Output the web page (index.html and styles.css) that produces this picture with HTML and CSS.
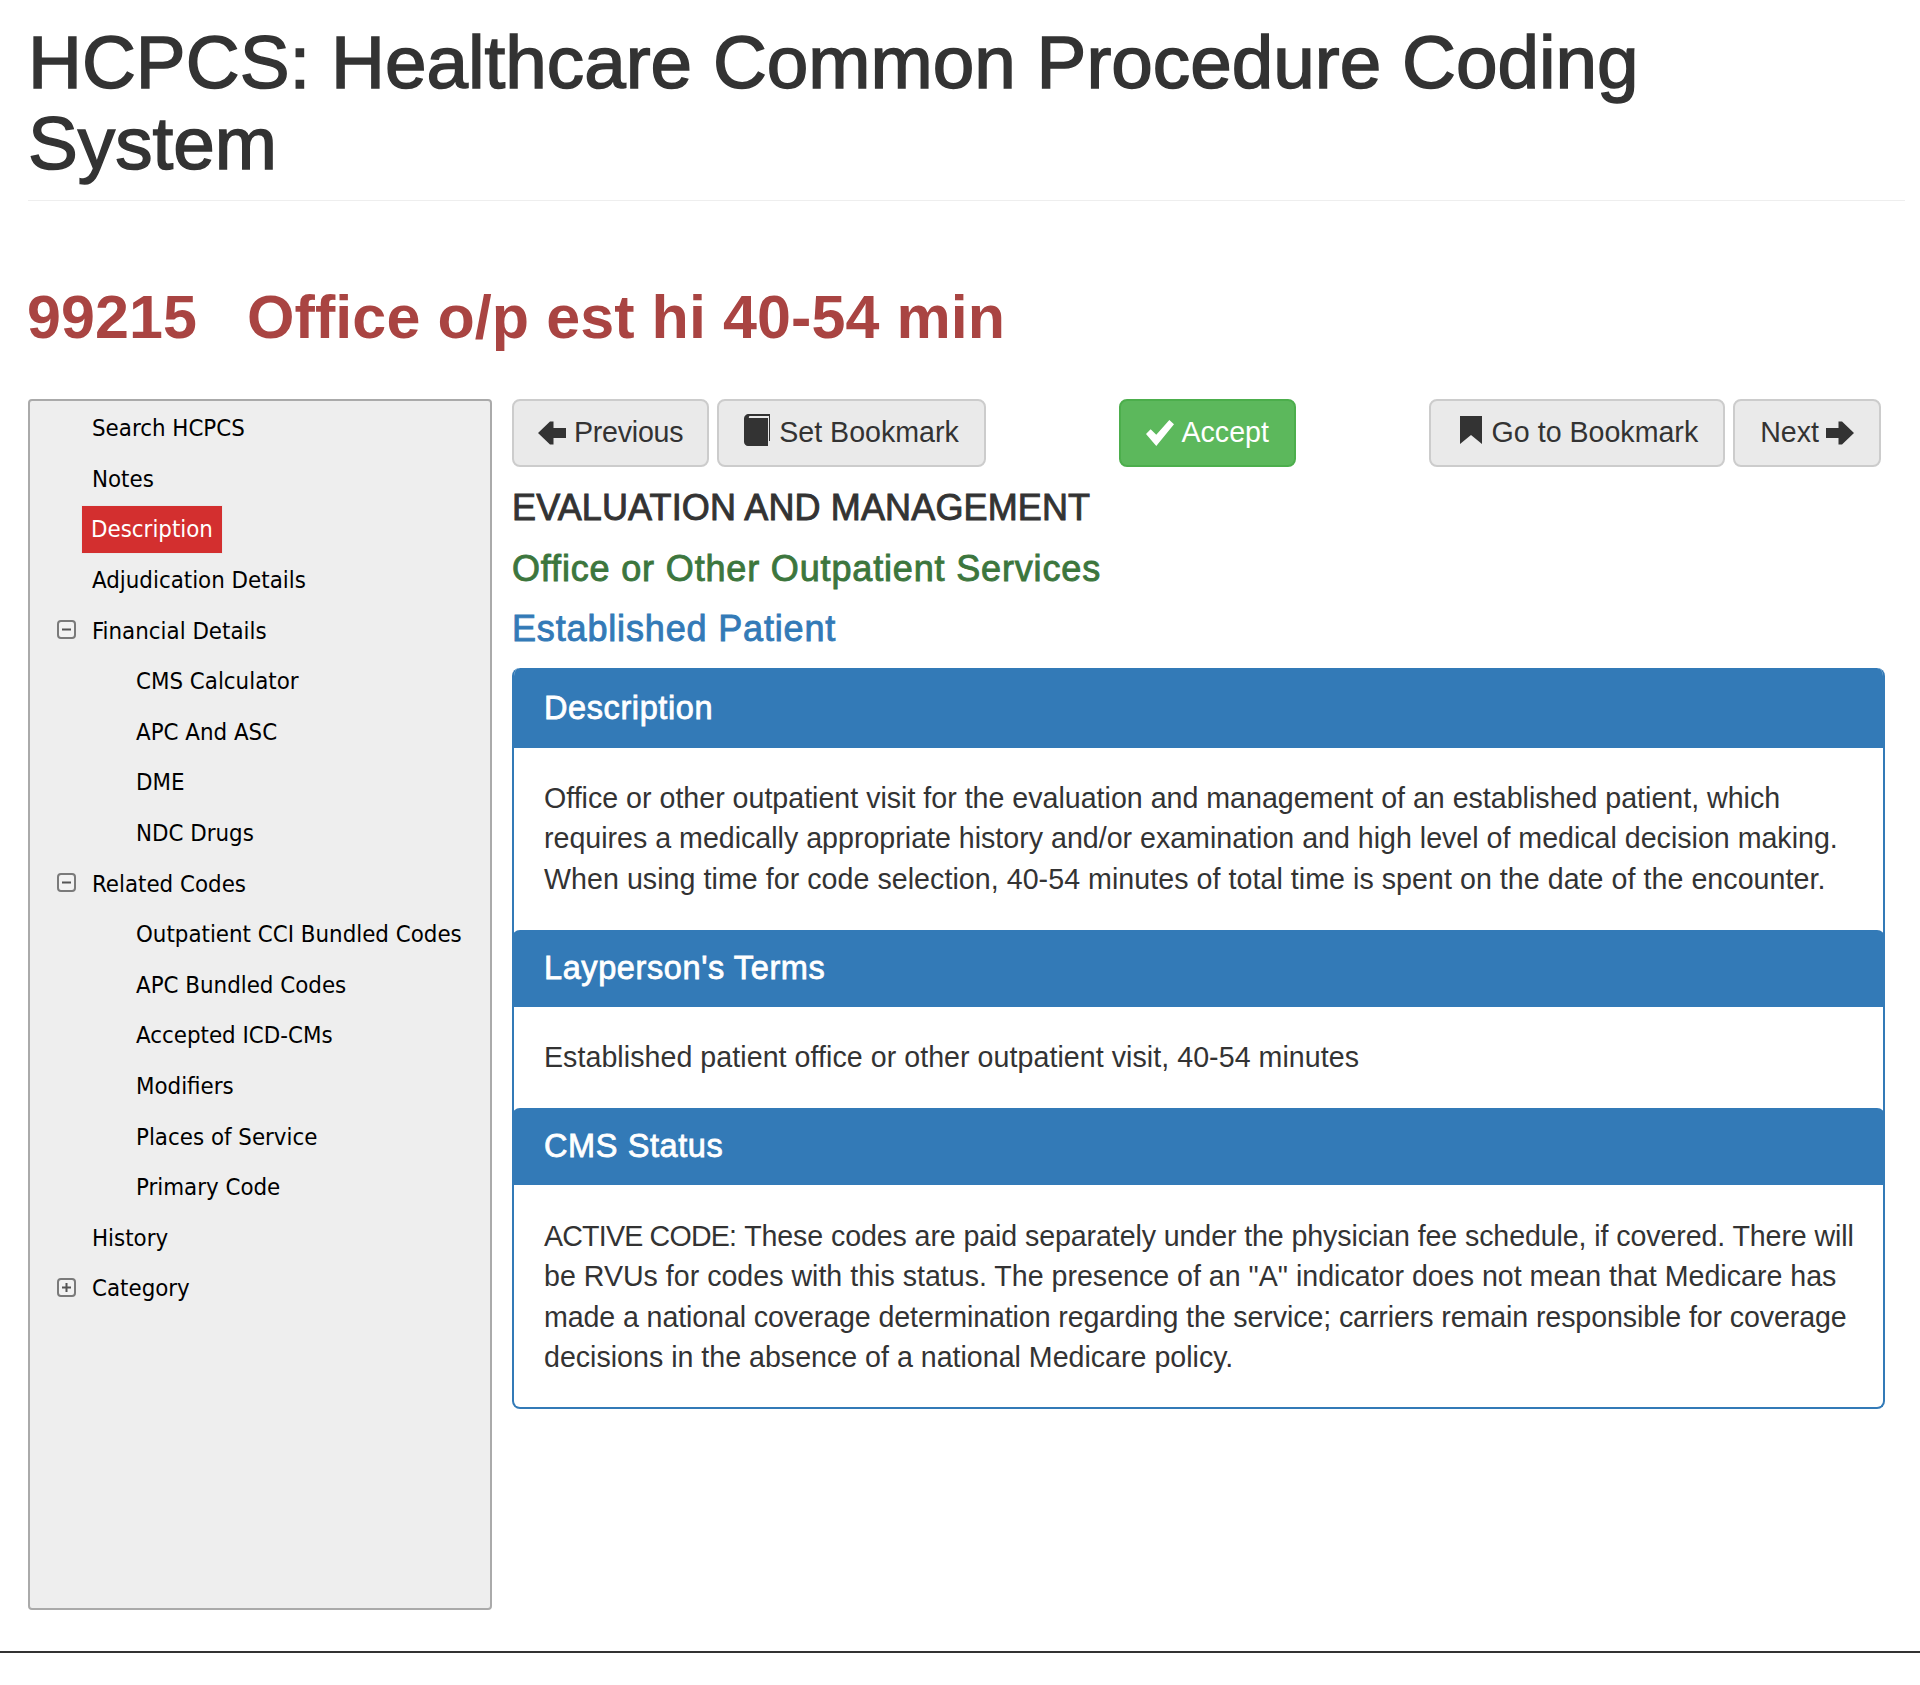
FILE: index.html
```html
<!DOCTYPE html>
<html lang="en">
<head>
<meta charset="utf-8">
<title>HCPCS</title>
<link rel="stylesheet" href="styles.css">
</head>
<body>
<div class="page">
  <h1 class="title">HCPCS: Healthcare Common Procedure Coding<br>System</h1>
  <h2 class="code"><span class="code-num">99215</span><span>Office o/p est hi 40-54 min</span></h2>
  <div class="main">
    <nav class="tree">
      <div class="node"><span class="label">Search HCPCS</span></div>
      <div class="node"><span class="label">Notes</span></div>
      <div class="node"><span class="label active">Description</span></div>
      <div class="node"><span class="label">Adjudication Details</span></div>
      <div class="node"><svg class="toggle" viewBox="0 0 19 19"><rect x="1" y="1" width="17" height="17" rx="3" fill="#f2f2f2" stroke="#7a7a7a" stroke-width="2"/><path d="M5 9.500h9" stroke="#555" stroke-width="2"/></svg><span class="label">Financial Details</span></div>
      <div class="node child"><span class="label">CMS Calculator</span></div>
      <div class="node child"><span class="label">APC And ASC</span></div>
      <div class="node child"><span class="label">DME</span></div>
      <div class="node child"><span class="label">NDC Drugs</span></div>
      <div class="node"><svg class="toggle" viewBox="0 0 19 19"><rect x="1" y="1" width="17" height="17" rx="3" fill="#f2f2f2" stroke="#7a7a7a" stroke-width="2"/><path d="M5 9.500h9" stroke="#555" stroke-width="2"/></svg><span class="label">Related Codes</span></div>
      <div class="node child"><span class="label">Outpatient CCI Bundled Codes</span></div>
      <div class="node child"><span class="label">APC Bundled Codes</span></div>
      <div class="node child"><span class="label">Accepted ICD-CMs</span></div>
      <div class="node child"><span class="label">Modifiers</span></div>
      <div class="node child"><span class="label">Places of Service</span></div>
      <div class="node child"><span class="label">Primary Code</span></div>
      <div class="node"><span class="label">History</span></div>
      <div class="node"><svg class="toggle" viewBox="0 0 19 19"><rect x="1" y="1" width="17" height="17" rx="3" fill="#f2f2f2" stroke="#7a7a7a" stroke-width="2"/><path d="M5 9.500h9M9.500 5v9" stroke="#555" stroke-width="2"/></svg><span class="label">Category</span></div>
    </nav>
    <section class="content">
      <div class="toolbar">
        <div class="btn-group">
          <a class="btn btn-prev"><svg class="ico" viewBox="0 0 28 28"><path d="M0 14 12 2.500h3.500V9H28v10H15.500V25.500H12z"/></svg><span class="tight-btn">Previous</span></a>
          <a class="btn"><svg class="ico book" viewBox="0 0 26 32"><path d="M5 0h21v27h-1V2H6.500C5 2 4.500 3 5 4h19v28H4C2 32 0 30 0 28V5C0 2 2 0 5 0z"/></svg>Set Bookmark</a>
        </div>
        <a class="btn btn-ok"><svg class="ico" viewBox="0 0 30 28"><path d="M0 15 5 10l6 6L25 0l5 4.500L11 28z"/></svg>Accept</a>
        <div class="btn-group">
          <a class="btn"><svg class="ico mark" viewBox="0 0 22 28"><path d="M0 0h22v28l-11-9-11 9z"/></svg>Go to Bookmark</a>
          <a class="btn btn-next">Next<svg class="ico after" viewBox="0 0 28 28"><path d="M28 14 16 2.500h-3.500V9H0v10h12.500V25.500H16z"/></svg></a>
        </div>
      </div>
      <h3 class="sec sec-dark">EVALUATION AND MANAGEMENT</h3>
      <h3 class="sec sec-green">Office or Other Outpatient Services</h3>
      <h3 class="sec sec-blue">Established Patient</h3>
      <div class="panel">
        <div class="panel-head first">Description</div>
        <p class="panel-body b1">Office or other outpatient visit for the evaluation and management of an established patient, which<br>requires a medically appropriate history and/or examination and high level of medical decision making.<br><span class="loose">When using time for code selection, 40-54 minutes of total time is spent on the date of the encounter.</span></p>
        <div class="panel-head">Layperson's Terms</div>
        <p class="panel-body b2"><span class="loose">Established patient office or other outpatient visit, 40-54 minutes</span></p>
        <div class="panel-head">CMS Status</div>
        <p class="panel-body b3"><span class="caps">ACTIVE CODE:</span> <span class="tight">These codes are paid separately under the physician fee schedule, if covered. There will</span><br>be RVUs for codes with this status. The presence of an "A" indicator does not mean that Medicare has<br><span class="tight">made a national coverage determination regarding the service; carriers remain responsible for coverage</span><br>decisions in the absence of a national Medicare policy.</p>
      </div>
    </section>
  </div>
</div>
<hr class="foot">
</body>
</html>
```
FILE: styles.css
```css
* { box-sizing: border-box; }
html, body { margin: 0; padding: 0; background: #fff; }
body { font-family: "Liberation Sans", Arial, sans-serif; color: #333; font-size: 28.6px; line-height: 40.6px; }
.page { padding: 22px 15px 0 28px; }
.title { margin: 0; border-bottom: 1px solid #eee; font-size: 74.7px; line-height: 81px; font-weight: 400; -webkit-text-stroke: 1.5px #333; color: #333; height: 179px; }
.code { margin: 83px 0 49px -1px; font-size: 61px; line-height: 66px; font-weight: 700; color: #a94442; letter-spacing: .08px; }
.code-num { margin-right: 50px; }
.main { display: flex; gap: 20px; align-items: flex-start; }
.tree { flex: 0 0 464px; height: 1211px; padding: 2px 0 0 0; background: #eee; border: 2px solid #aaa; border-radius: 4px; font-family: "DejaVu Sans Condensed", "DejaVu Sans", sans-serif; font-stretch: condensed; font-size: 23.8px; color: #000; }
.node { position: relative; height: 50.6px; padding-left: 52px; display: flex; align-items: center; line-height: 34px; }
.node.child { padding-left: 96px; }
.label { padding: 0 10px; white-space: nowrap; }
.label.active { background: #d32f2f; color: #fff; border: 1px solid #e9e9e9; padding: 6px 9px; height: 49px; margin-left: -1px; }
.toggle { position: absolute; left: 27px; top: 15px; width: 19px; height: 19px; }
.content { flex: 0 0 1373px; min-width: 0; }
.toolbar { display: flex; justify-content: space-between; align-items: center; padding-right: 4px; height: 68px; }
.btn-group { display: flex; gap: 8px; }
.btn { display: flex; align-items: center; height: 68px; padding: 0 25px 1px; background: #eaeaea; border: 2px solid #ccc; border-radius: 8px; color: #333; white-space: nowrap; }
.btn-prev { padding: 0 24px 1px; }
.btn-next { padding: 0 25px 1px; }
.btn-ok { background: #5cb85c; border-color: #4cae4c; color: #fff; }
.tight-btn { letter-spacing: -.25px; }
.ico { width: 28px; height: 28px; fill: currentColor; margin-right: 8px; flex: none; }
.ico.after { margin: 0 0 0 7px; }
.ico.book { width: 26px; height: 32px; margin: -6px 9px 0 0; }
.ico.mark { width: 22px; height: 28px; margin: -6px 10px 0 4px; }
.sec { margin: 0; height: 60px; font-size: 36px; line-height: 60px; font-weight: 400; -webkit-text-stroke: .9px currentColor; }
.sec-dark { margin-top: 11px; height: 61px; color: #333; letter-spacing: .14px; }
.sec-green { color: #3c763d; letter-spacing: .84px; }
.sec-blue { color: #337ab7; letter-spacing: .84px; }
.panel { margin-top: 9px; border: 2px solid #337ab7; border-top: 0; border-radius: 8px; overflow: hidden; width: 1373px; }
.panel-head { margin: 0 -2px; height: 77px; padding: 0 32px; background: #337ab7; color: #fff; font-size: 32.5px; line-height: 76px; letter-spacing: .6px; -webkit-text-stroke: .8px #fff; border-radius: 8px 8px 0 0; }
.panel-head.first { height: 80px; line-height: 80px; }
.panel-body { margin: 0; padding-left: 30px; }
.b1 { padding-top: 29.5px; padding-bottom: 30.3px; }
.b2 { padding-top: 30px; padding-bottom: 31px; }
.b3 { padding-top: 30.5px; padding-bottom: 29px; }
.caps { letter-spacing: -.8px; }
.tight { letter-spacing: -.1px; }
.loose { letter-spacing: .05px; }
.foot { margin: 41px 0 0; border: 0; border-top: 2px solid #333; height: 0; }
```
